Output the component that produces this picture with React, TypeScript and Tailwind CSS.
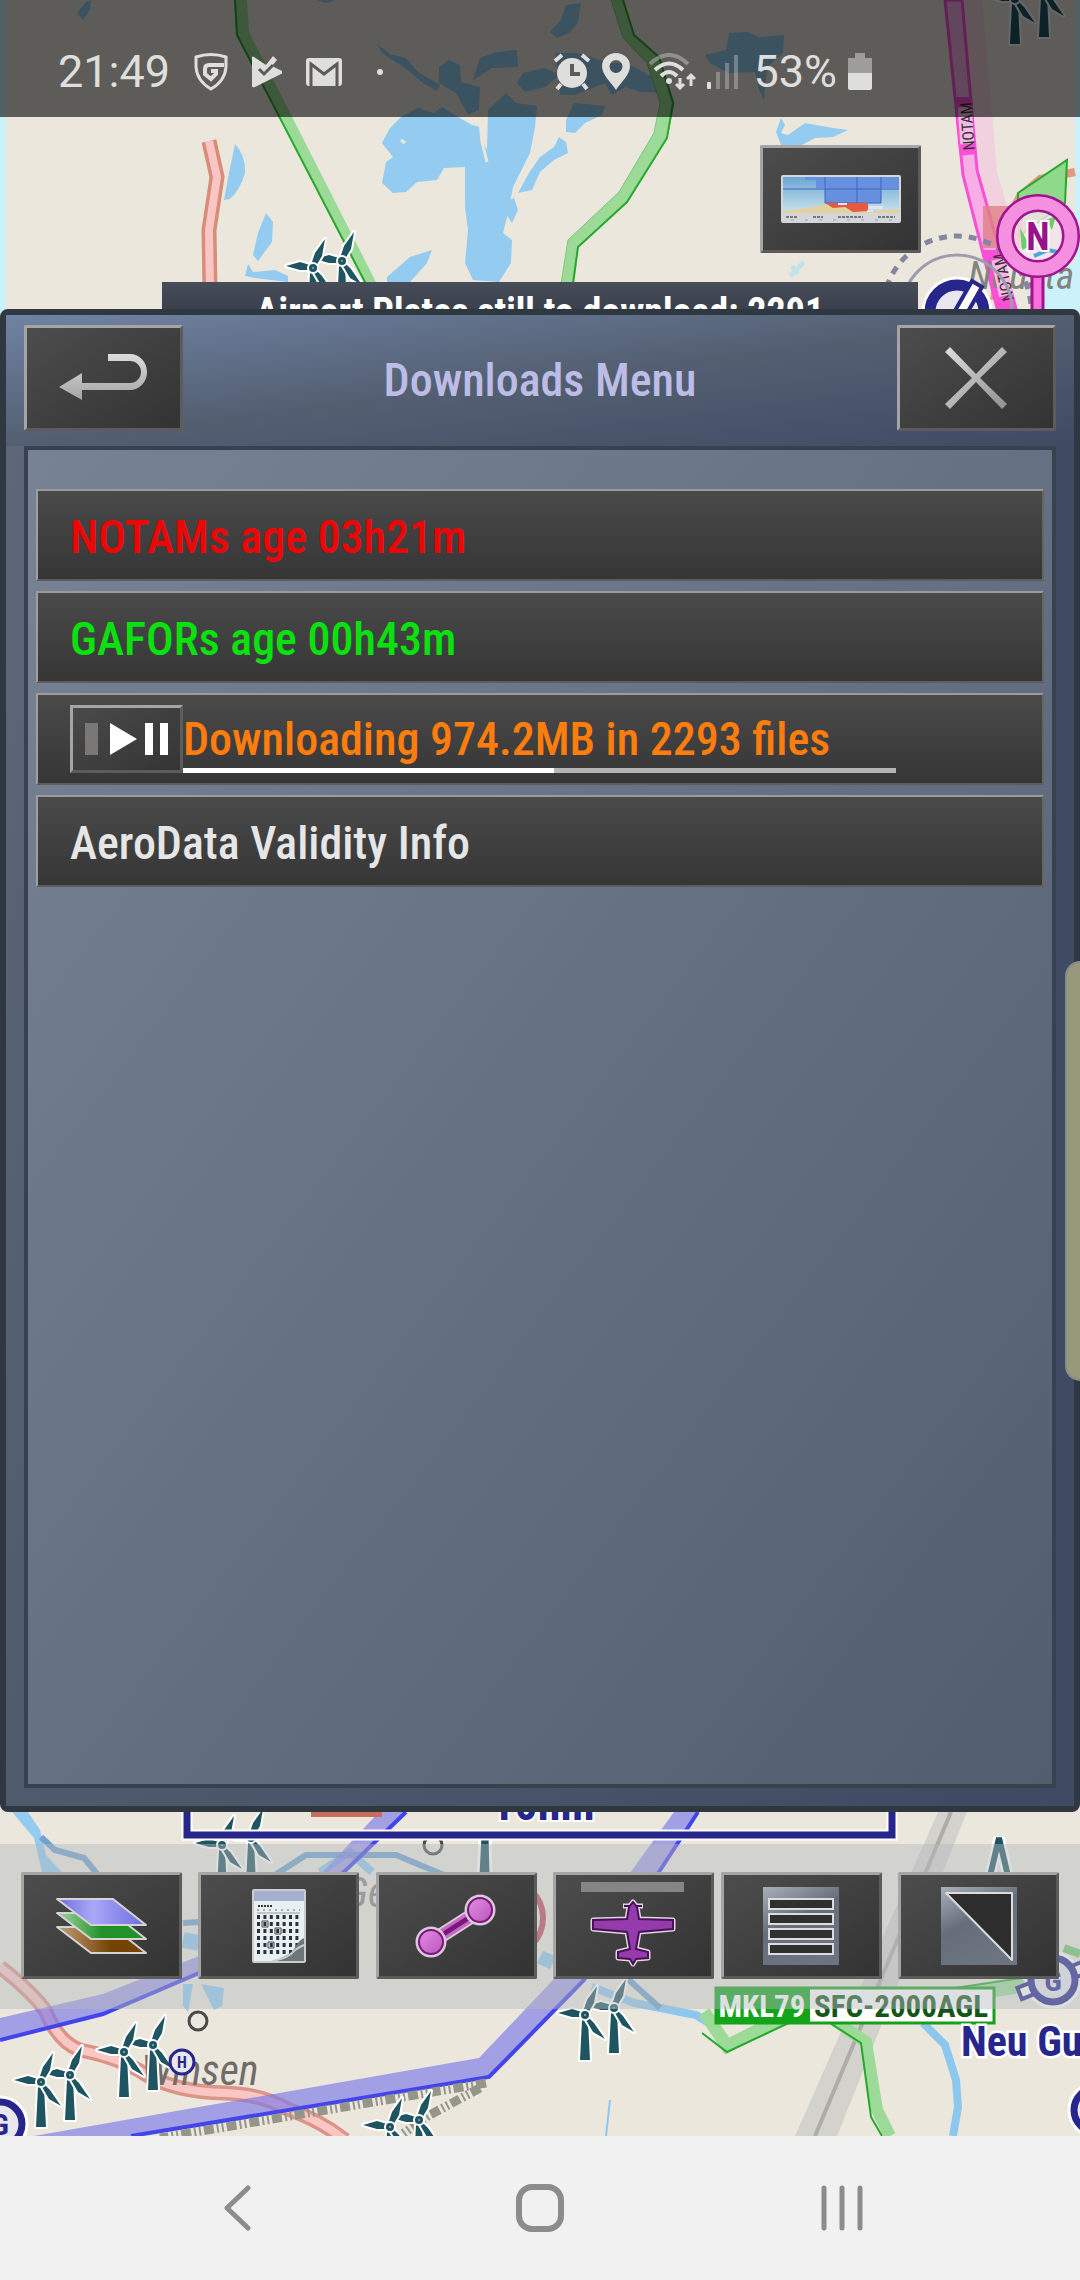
import React from 'react';

const NARROW = '"Roboto Condensed", "Liberation Sans Narrow", sans-serif';

interface PointProps {
  x: number;
  y: number;
}

const Turbine: React.FC<PointProps> = ({ x, y }) => (
  <g transform={`translate(${x} ${y})`} fill="#1f5560" stroke="#ffffff" strokeWidth="4" strokeLinejoin="round" paintOrder="stroke">
    <path d="M-3 5 L3 5 L5 45 L-5 45 Z" />
    <path d="M-2 -3 L2 -15 L12 -29 L9 -12 L3 -2 Z" />
    <path d="M-3 -3 L-13 -6 L-27 -2 L-13 2 L-3 2 Z" />
    <path d="M3 2 L9 8 L20 24 L8 17 L1 5 Z" />
    <circle r="4" />
    <circle r="1" fill="#8fb0b4" strokeWidth="0" />
  </g>
);

const TurbinePair: React.FC<PointProps> = ({ x, y }) => (
  <g>
    <Turbine x={x + 29} y={y - 7} />
    <Turbine x={x} y={y} />
  </g>
);

interface GliderSiteProps extends PointProps {
  runway?: boolean;
}

const GliderSite: React.FC<GliderSiteProps> = ({ x, y, runway = false }) => (
  <g transform={`translate(${x} ${y})`}>
    <circle r="22" fill="none" stroke="#ffffff" strokeWidth="13" />
    {runway && (
      <rect x="-36" y="-6" width="72" height="12" fill="#ffffff" stroke="#26268c" strokeWidth="4" transform="rotate(-22)" />
    )}
    <circle r="22" fill="#e9e6ee" stroke="#26268c" strokeWidth="7" />
    <text y="11" textAnchor="middle" fontSize="30" fontWeight="700" fill="#26268c">G</text>
  </g>
);

const water = [
  'M77 13 L86 2 L91 0 L90 10 L83 20 Z',
  'M316 0 L336 0 L326 3 Z',
  'M235 144 Q246 156 245 173 Q240 190 230 199 L224 200 L229 173 Z',
  'M266 213 L273 222 L272 242 L258 261 L253 255 L258 233 Z',
  'M248 264 L253 272 L275 270 L288 276 L288 282 L255 278 L245 276 Z',
  'M377 44 L390 54 L406 58 L418 72 L440 85 L437 91 L423 83 L405 68 L382 53 Z',
  'M439 67 L449 60 L460 65 L461 82 L480 87 L479 110 L468 115 L456 93 L439 83 Z',
  'M473 80 L480 58 L496 52 L517 50 L518 67 L492 68 Z',
  'M517 83 L523 73 L545 68 L560 75 L545 87 L525 92 Z',
  'M382 143 L390 128 L401 117 L418 108 L434 113 L442 107 L458 117 L472 125 L480 127 L482 140 L487 150 L488 110 L506 93 L516 103 L537 106 L535 127 L530 153 L513 187 L508 213 L503 233 L512 240 L511 263 L499 282 L473 280 L465 263 L468 230 L465 207 L465 167 L444 168 L437 180 L417 182 L406 192 L393 193 L382 183 L386 162 L393 157 Z',
  'M387 277 L410 257 L432 250 L427 263 L410 282 L387 282 Z',
  'M518 193 L529 173 L540 157 L554 147 L559 137 L566 142 L568 153 L554 160 L540 172 L532 190 Z',
  'M503 204 L514 198 L518 210 L512 223 L506 214 Z',
  'M566 120 L574 103 L605 106 L602 115 L585 123 L575 133 L566 132 Z',
  'M555 53 L578 53 L609 63 L626 63 L653 77 L671 93 L640 92 L626 87 L612 95 L605 83 L575 95 L560 95 Z',
  'M550 32 L561 20 L566 5 L581 3 L578 23 L569 33 L557 38 Z',
  'M705 55 L726 50 L729 33 L747 32 L760 37 L784 35 L783 53 L767 67 L764 100 L759 90 L755 72 L728 73 L710 63 Z',
  'M776 132 L781 118 L785 125 L781 133 L788 135 L805 123 L833 128 L848 130 L833 137 L815 138 L802 145 L781 145 Z',
  'M12 1812 L28 1812 L40 1830 L46 1855 L62 1872 L42 1872 L34 1838 Z',
  'M183 1984 L193 1984 L188 2012 L183 2006 Z',
  'M201 1984 L224 1988 L222 2006 L214 2010 Z',
];

const MapView: React.FC = () => (
  <svg
    className="absolute inset-0 h-full w-full"
    viewBox="0 0 1080 2136"
    preserveAspectRatio="xMidYMin slice"
    fontFamily={NARROW}
    aria-hidden="true"
  >
    <rect width="1080" height="2136" fill="#ebe7dd" />
    <rect width="6" height="340" fill="#cbf2fb" />
    <path d="M1075 0 H1080 V320 H1044 V276 L1075 262 Z" fill="#cbf2fb" />
    {water.map((d) => (
      <path key={d} d={d} fill="#93ccf0" />
    ))}
    <path d="M480 122 L482 142 L487 162 M405 143 L401 140" fill="none" stroke="#ebe7dd" strokeWidth="3" />
    <path d="M790 276 L804 262 M792 266 L798 274" stroke="#c5e2ea" strokeWidth="5" />

    {/* rivers and canals */}
    <g fill="none" stroke="#8cc8ee" strokeWidth="8">
      <path d="M592 1987 L634 2003 L696 2015 L709 2023" />
      <path d="M923 2023 L945 2045 L956 2080 L958 2107 L953 2136" />
      <path d="M320 1872 L350 1852 L372 1872" />
      <path d="M540 1957 L553 1963" strokeWidth="14" />
      <path d="M183 1940 L199 1943" strokeWidth="16" />
      <path d="M610 2100 L606 2136" strokeWidth="2" />
    </g>
    <g fill="none" stroke="#6fa3cc" strokeWidth="6">
      <path d="M41 1837 L55 1850 L84 1858 L98 1875" />
      <path d="M275 1875 L306 1855 L396 1855 L444 1875" />
      <path d="M620 1972 L660 2008" />
      <path d="M183 1923 L199 1922" />
    </g>

    {/* roads */}
    <g fill="none" strokeLinejoin="round">
      <path d="M209 141 L217 177 L209 230 L210 290" stroke="#d88c79" strokeWidth="15" />
      <path d="M209 141 L217 177 L209 230 L210 290" stroke="#fac6c3" strokeWidth="8" />
      <path d="M1075 172 L1040 179 L1020 196 L1008 220 L994 300" stroke="#e5987f" strokeWidth="8" />
      <path d="M0 1967 Q30 1990 45 2010 Q58 2042 80 2050 Q120 2058 145 2074 Q175 2092 225 2093 Q260 2094 285 2108 Q320 2120 345 2140" stroke="#dd9488" strokeWidth="15" />
      <path d="M0 1967 Q30 1990 45 2010 Q58 2042 80 2050 Q120 2058 145 2074 Q175 2092 225 2093 Q260 2094 285 2108 Q320 2120 345 2140" stroke="#fac6c3" strokeWidth="8" />
    </g>

    {/* grey corridor */}
    <path d="M938 1812 L967 1812 L837 2136 L795 2136 Z" fill="#cbc9c4" opacity="0.7" />
    <path d="M951 1812 L815 2136" stroke="#aeaca8" strokeWidth="4" />

    {/* green airspace */}
    <path d="M234 0 L247 0 L249 32 L377 284 L365 284 L236 35 Z" fill="#9cdb97" />
    <path d="M235 0 L237 35 L366 284" fill="none" stroke="#27a82d" strokeWidth="2" />
    <path d="M611 0 L623 38 L647 63 L660 103 L654 133 L619 192 L568 240 L561 284 L573 284 L578 247 L627 202 L667 138 L674 103 L659 57 L634 35 L623 0 Z" fill="#9cdb97" stroke="#7cc878" strokeWidth="1" />
    <path d="M573 284 L578 247 L627 202 L667 138 L673 103 L659 57 L634 35 L623 0" fill="none" stroke="#27a82d" strokeWidth="2" />
    <path d="M704 2012 L727 2046 L790 2014" fill="none" stroke="#9cdb97" strokeWidth="13" />
    <path d="M702 2033 L727 2052 L795 2020" fill="none" stroke="#27a82d" strokeWidth="2" />
    <path d="M834 2020 L866 2042 L877 2110 L890 2136" fill="none" stroke="#9cdb97" strokeWidth="12" />
    <path d="M830 2023 L861 2043 L871 2117 L882 2136" fill="none" stroke="#27a82d" strokeWidth="2" />
    <path d="M960 1987 L1022 1978 L1028 1992 L995 1997 Z" fill="#9cdb97" />
    <path d="M955 1988 L1022 1978" stroke="#27a82d" strokeWidth="2" />
    <path d="M1064 1948 L1080 1954" stroke="#6cc868" strokeWidth="8" />

    {/* blue airspace */}
    <path d="M379 1812 L406 1812 L344 1872 L199 1973 L103 2014 L0 2040 L0 2018 L103 1994 L199 1956 L323 1872 Z" fill="#7b78e8" opacity="0.65" />
    <path d="M406 1812 L344 1872 L199 1973 L103 2014 L0 2040" fill="none" stroke="#4444ec" strokeWidth="4" />
    <path d="M674 1812 L698 1812 L584 1980 L489 2077 L131 2136 L34 2136 L479 2058 L553 1980 Z" fill="#7b78e8" opacity="0.65" />
    <path d="M698 1812 L659 1872 L584 1980 L489 2077 L131 2136" fill="none" stroke="#4444ec" strokeWidth="4" />
    <path d="M486 2083 L160 2138" stroke="#95968a" strokeWidth="9" strokeDasharray="10 3 2 3 2 3" />
    <path d="M480 2088 L428 2116 L400 2136" fill="none" stroke="#95968a" strokeWidth="9" strokeDasharray="10 3 2 3 2 3" />

    {/* NOTAM corridor */}
    <path d="M962 0 L982 0 L990 90 L997 172 L1014 230 L1000 245 L977 177 Z" fill="#f2cdde" opacity="0.85" />
    <path d="M945 0 L962 0 L977 170 L1017 312 L998 312 L963 175 Z" fill="#f6aee4" stroke="#fb4fd6" strokeWidth="3" />
    <path d="M954 97 L972 97 L976 154 L960 156 Z" fill="#fb4fd6" />
    <path d="M983 250 L999 250 L1018 312 L999 312 Z" fill="#fb4fd6" />
    <rect x="959" y="107" width="14" height="37" fill="#f8b9e8" transform="rotate(-4 966 126)" />
    <text fontSize="16" fill="#333333" textAnchor="middle" transform="translate(973 126) rotate(-94)">NOTAM</text>
    <path d="M1018 193 L1067 160 L1065 203 L1018 237 Z" fill="#8fd98a" stroke="#27a82d" strokeWidth="2" />
    <rect x="983" y="206" width="40" height="42" fill="#e07f86" opacity="0.8" />
    <text x="968" y="289" fontSize="39" fontStyle="italic" fill="#85837e">Neusta</text>
    <rect x="995" y="259" width="14" height="37" fill="#f8b9e8" transform="rotate(-12 1002 277)" />
    <text fontSize="16" fill="#333333" textAnchor="middle" transform="translate(1009 276) rotate(-102)">NOTAM</text>
    <circle cx="957" cy="310" r="74" fill="none" stroke="#85879e" strokeWidth="5" strokeDasharray="8 7" />
    <circle cx="957" cy="310" r="55" fill="none" stroke="#9d9cab" strokeWidth="3" />
    <circle cx="957" cy="312" r="27" fill="none" stroke="#ffffff" strokeWidth="17" />
    <circle cx="957" cy="312" r="27" fill="#e9e6ee" stroke="#26268c" strokeWidth="11" />
    <path d="M952 316 L972 281 L982 287 L962 322 Z" fill="#ffffff" stroke="#26268c" strokeWidth="4" />
    <rect x="1032" y="274" width="11" height="38" fill="#fb6fdb" stroke="#a01490" strokeWidth="3" />
    <circle cx="1038" cy="236" r="24" fill="#f7e3ee" opacity="0.8" />
    <path d="M1020 228 L1030 246 L1022 250 Z M1056 216 L1046 220 L1052 230 Z" fill="#6fcb6c" />
    <path d="M1034 256 L1048 250 L1058 252" fill="none" stroke="#4aa6dc" strokeWidth="4" />
    <circle cx="1038" cy="236" r="33" fill="none" stroke="#a01490" strokeWidth="18" />
    <circle cx="1038" cy="236" r="33" fill="none" stroke="#f58fe0" strokeWidth="13" />
    <text x="1038" y="250" fontSize="38" fontWeight="700" fill="#98128a" stroke="#ffffff" strokeWidth="4" paintOrder="stroke" textAnchor="middle">N</text>

    {/* obstacles */}
    <TurbinePair x={1015} y={-1} />
    <TurbinePair x={313} y={268} />
    <TurbinePair x={222} y={1845} />
    <TurbinePair x={585} y={2015} />
    <path d="M480 1836 L490 1836 L491 1875 L478 1875 Z" fill="#1f5560" stroke="#ffffff" strokeWidth="3" />
    <path d="M990 1876 L999 1838 L1008 1876" fill="none" stroke="#ffffff" strokeWidth="11" />
    <path d="M990 1876 L999 1838 L1008 1876" fill="none" stroke="#1f5560" strokeWidth="6" />
    <circle cx="433" cy="1845" r="9" fill="none" stroke="#4a4a4a" strokeWidth="3" />
    <circle cx="198" cy="2021" r="9" fill="none" stroke="#4a4a4a" strokeWidth="3" />
    <circle cx="505" cy="1918" r="38" fill="none" stroke="#c2475e" strokeWidth="6" />
    <text x="344" y="1907" fontSize="42" fontStyle="italic" fill="#85837e">Ge</text>
    <text x="141" y="2085" fontSize="42" fontStyle="italic" fill="#6f6d69">Winsen</text>
    <TurbinePair x={41} y={2082} />
    <TurbinePair x={124} y={2052} />
    <TurbinePair x={390} y={2127} />
    <circle cx="182" cy="2062" r="12" fill="#e9e6ee" stroke="#26268c" strokeWidth="3" />
    <text x="182" y="2068" fontSize="16" fontWeight="700" fill="#26268c" textAnchor="middle">H</text>
    <GliderSite x={1053} y={1980} runway />
    <GliderSite x={0} y={2124} />
    <GliderSite x={1096} y={2110} />

    {/* scale box */}
    <rect x="311" y="1806" width="71" height="11" fill="#c66f5d" />
    <path d="M187 1800 L187 1835 L892 1835 L892 1800" fill="none" stroke="#ffffff" strokeWidth="11" />
    <path d="M187 1800 L187 1835 L892 1835 L892 1800" fill="none" stroke="#26268c" strokeWidth="7" />
    <text x="543" y="1820" fontSize="46" fontWeight="700" fill="#26268c" stroke="#ffffff" strokeWidth="4" paintOrder="stroke" textAnchor="middle">10nm</text>

    {/* airspace label */}
    <rect x="716" y="1988" width="278" height="35" fill="#ffffff" stroke="#16a01c" strokeWidth="3" />
    <rect x="716" y="1988" width="94" height="35" fill="#12a519" />
    <text x="762" y="2017" fontSize="31" fontWeight="700" fill="#ffffff" textAnchor="middle">MKL79</text>
    <text x="901" y="2017" fontSize="31" fontWeight="700" fill="#14561a" textAnchor="middle">SFC-2000AGL</text>
    <text x="961" y="2056" fontSize="42" fontWeight="700" fill="#26268c" stroke="#ffffff" strokeWidth="5" paintOrder="stroke">Neu Gu</text>
  </svg>
);

const StatusBar: React.FC = () => (
  <header className="relative flex h-[117px] items-center justify-between bg-black/60 pt-[26px] pr-[208px] pl-[58px] font-['Roboto',sans-serif] text-[45px] leading-none text-[#dededc]">
    <div className="flex items-center gap-6">
      <span>21:49</span>
      <svg width="34" height="38" viewBox="0 0 34 38" fill="none" stroke="currentColor" strokeWidth="3">
        <path d="M2 4 Q17 -1 32 4 V14 Q31 28 17 36 Q3 28 2 14 Z" />
        <path d="M30 12 H15 Q11 12 11 16 V21 L17 26 L22 21 V18 H17" strokeWidth="4" />
      </svg>
      <svg width="30" height="32" viewBox="0 0 30 32">
        <path d="M0 1 Q0 0 2 1 L14 9 L21 0 L25 4 L20 10 L30 15 Q31 17 29 18 L3 31 Q0 32 0 30 Z" fill="currentColor" />
        <path d="M7 13 L12 18 L21 9" fill="none" stroke="#5c5b57" strokeWidth="3" />
      </svg>
      <svg width="36" height="30" viewBox="0 0 36 30">
        <rect x="0" y="1" width="36" height="28" rx="3" fill="currentColor" />
        <path d="M5 29 V7 L18 17 L31 7 V29" fill="none" stroke="#5c5b57" strokeWidth="3" />
      </svg>
      <svg width="28" height="30" viewBox="0 0 28 30">
        <circle cx="14" cy="15" r="3" fill="currentColor" />
      </svg>
    </div>
    <div className="flex items-center gap-[11px]">
      <svg width="38" height="38" viewBox="0 0 38 38" fill="none" stroke="currentColor" strokeWidth="4">
        <circle cx="19" cy="20" r="15" fill="currentColor" stroke="none" />
        <path d="M2 8 L9 2 M29 2 L36 8 M8 31 L4 36 M30 31 L34 36" />
        <path d="M19 11 V21 H27" stroke="#5c5b57" />
      </svg>
      <svg width="28" height="37" viewBox="0 0 28 37">
        <path d="M14 37 C9 29 0 22 0 13 A14 13 0 0 1 28 13 C28 22 19 29 14 37 Z M14 7 A6 6 0 1 0 14 20 A6 6 0 1 0 14 7 Z" fill="currentColor" fillRule="evenodd" />
      </svg>
      <svg className="ml-2" width="47" height="37" viewBox="0 0 47 37" fill="none" stroke="currentColor" strokeWidth="4">
        <path d="M1 11 Q20 -7 39 11" opacity="0.4" />
        <path d="M6 17 Q20 4 34 17" />
        <path d="M12 23 Q20 15 28 23" />
        <circle cx="20" cy="28" r="3" fill="currentColor" stroke="none" />
        <path d="M31 25 V35 M27 31 L31 35 L35 31 M42 33 V22 M38 26 L42 22 L46 26" strokeWidth="3" />
      </svg>
      <svg width="31" height="36" viewBox="0 0 31 36" fill="currentColor">
        <rect x="0" y="28" width="4" height="7" rx="1" />
        <path d="M9 18 h4 v17 h-4 Z M18 9 h4 v26 h-4 Z M27 1 h4 v34 h-4 Z" opacity="0.35" />
      </svg>
      <span className="ml-1">53%</span>
      <svg width="24" height="37" viewBox="0 0 24 37" fill="currentColor">
        <path d="M7 0 H17 V5 H24 V20 H0 V5 H7 Z" opacity="0.5" />
        <path d="M0 20 H24 V35 Q24 37 22 37 H2 Q0 37 0 35 Z" />
      </svg>
    </div>
  </header>
);

interface TileProps {
  label: string;
  className?: string;
  children: React.ReactNode;
}

const Tile: React.FC<TileProps> = ({ label, className = '', children }) => (
  <button
    type="button"
    aria-label={label}
    className={`flex items-center justify-center rounded-[2px] border-[3px] border-t-[#a5a5a5] border-r-[#5c5c5c] border-b-[#5c5c5c] border-l-[#a5a5a5] bg-linear-to-br from-[#4d4d4d] via-[#404040] to-[#333333] ${className}`}
  >
    {children}
  </button>
);

const ProfileIcon: React.FC = () => (
  <svg width="120" height="48" viewBox="0 0 120 48">
    <defs>
      <linearGradient id="sky" x1="0" y1="0" x2="0" y2="1">
        <stop offset="0" stopColor="#6ba6d6" />
        <stop offset="1" stopColor="#c9e4ea" />
      </linearGradient>
    </defs>
    <rect width="120" height="48" rx="2" fill="#d4d7da" />
    <rect x="2" y="2" width="116" height="36" fill="url(#sky)" />
    <path d="M24 2 V5 H35 V13 H44 V28 H100 V13 H118 V2 Z" fill="#6690e0" />
    <path d="M44 2 V28 H100 V2 M2 14 H118 M76 2 V28" fill="none" stroke="#4463bd" />
    <path d="M2 36 L20 34 L46 29 L80 36 L118 34 V38 H2 Z" fill="#e3d1a2" />
    <path d="M44 28 H87 V36 L72 37 L64 32 L52 33 Z" fill="#e8583c" />
    <path d="M57 28 h9 v2 h-9 Z M88 31 h14 v3 h-14 Z M86 35 h6 v2 h-6 Z" fill="#dfe4fa" />
    <path d="M5 42 H16 M32 42 H42 M57 42 H82 M97 42 H114" stroke="#777777" strokeWidth="2" strokeDasharray="3 1" />
    <path d="M10 45 H112" stroke="#9e9e9e" strokeDasharray="3 11" />
  </svg>
);

const BackIcon: React.FC = () => (
  <svg width="90" height="50" viewBox="0 0 90 50">
    <defs>
      <linearGradient id="backFill" x1="0" y1="0" x2="0" y2="1">
        <stop offset="0" stopColor="#dcdadb" />
        <stop offset="1" stopColor="#a5a3a4" />
      </linearGradient>
    </defs>
    <path d="M49 1 H71 A17 18 0 0 1 71 37 H23 V47 L0 34 L23 20 V30 H71 A11 11 0 0 0 71 8 H49 Z" fill="url(#backFill)" />
  </svg>
);

const CloseIcon: React.FC = () => (
  <svg width="62" height="62" viewBox="0 0 62 62">
    <defs>
      <linearGradient id="closeFill" x1="0" y1="0" x2="1" y2="1">
        <stop offset="0" stopColor="#dedede" />
        <stop offset="1" stopColor="#8f8f8f" />
      </linearGradient>
    </defs>
    <path d="M5 0 L31 27 L57 0 L62 5 L35 31 L62 57 L57 62 L31 35 L5 62 L0 57 L27 31 L0 5 Z" fill="url(#closeFill)" />
  </svg>
);

const LayersIcon: React.FC = () => (
  <svg width="92" height="58" viewBox="0 0 92 58" stroke="#d5d3d3" strokeWidth="2" strokeLinejoin="round">
    <defs>
      <linearGradient id="layerTop" x1="0" y1="0" x2="1" y2="0">
        <stop offset="0" stopColor="#6f6be0" />
        <stop offset="0.4" stopColor="#a9a8f7" />
        <stop offset="1" stopColor="#6f6be0" />
      </linearGradient>
      <linearGradient id="layerMid" x1="0" y1="0" x2="1" y2="0">
        <stop offset="0.1" stopColor="#8ac98a" />
        <stop offset="0.5" stopColor="#23912a" />
      </linearGradient>
      <linearGradient id="layerLow" x1="0" y1="0" x2="1" y2="0">
        <stop offset="0.1" stopColor="#b59067" />
        <stop offset="0.6" stopColor="#754404" />
      </linearGradient>
    </defs>
    <path d="M1 30 H57 L90 56 H35 Z" fill="url(#layerLow)" />
    <path d="M1 16 H57 L90 42 H35 Z" fill="url(#layerMid)" />
    <path d="M1 2 H57 L90 28 H35 Z" fill="url(#layerTop)" />
  </svg>
);

const calendarRows = [0, 1, 2, 3, 4, 5];
const calendarCols = [0, 1, 2, 3, 4, 5, 6];

const CalendarIcon: React.FC = () => (
  <svg width="54" height="74" viewBox="0 0 54 74">
    <rect x="1" y="1" width="52" height="72" rx="1" fill="#e9f0f4" stroke="#cccccc" strokeWidth="2" />
    <rect x="2" y="2" width="50" height="10" fill="#a5afd2" />
    <path d="M6 17 H20" stroke="#333333" strokeWidth="2" strokeDasharray="2 1" />
    <path d="M5 21 H48" stroke="#666666" strokeDasharray="2 4" />
    <path d="M5 24 H48" stroke="#999999" />
    {calendarRows.map((row) =>
      calendarCols.map((col) => (
        <rect key={`${row}-${col}`} x={5 + col * 6.4} y={26 + row * 7} width="3" height="4" fill="#2b3138" />
      )),
    )}
    <path d="M10 32 h6 v6 h-6 Z M23 39 h6 v6 h-6 Z M16 53 h6 v6 h-6 Z" fill="none" stroke="#444444" />
    <path d="M20 72 Q36 68 42 60 Q46 52 52 49 V72 Z" fill="#6f7678" />
    <path d="M20 72 Q36 70 43 61 Q47 58 52 56" fill="none" stroke="#c9cfd1" strokeWidth="2" />
  </svg>
);

const RouteIcon: React.FC = () => (
  <svg width="82" height="66" viewBox="0 0 82 66">
    <defs>
      <linearGradient id="knob" x1="0" y1="0" x2="1" y2="1">
        <stop offset="0" stopColor="#e493e4" />
        <stop offset="1" stopColor="#b850b9" />
      </linearGradient>
    </defs>
    <path d="M16 49 L66 17" stroke="#d9c9da" strokeWidth="15" />
    <path d="M16 49 L66 17" stroke="#c767c7" strokeWidth="11" />
    <path d="M16 49 L66 17" stroke="#7a167c" strokeWidth="5" />
    <circle cx="16" cy="49" r="14" fill="url(#knob)" stroke="#d9c9da" strokeWidth="3" />
    <circle cx="16" cy="49" r="12" fill="none" stroke="#7a167c" strokeWidth="2" />
    <circle cx="65" cy="17" r="14" fill="url(#knob)" stroke="#d9c9da" strokeWidth="3" />
    <circle cx="65" cy="17" r="12" fill="none" stroke="#7a167c" strokeWidth="2" />
  </svg>
);

const PLANE_BODY =
  'M52 20 L56 25 L58 37 L92 38 V47 L58 50 L55 67 L67 70 V76 L55 77 L52 82 L49 77 L37 76 V70 L49 67 L46 50 L12 47 V38 L46 37 L48 25 Z';

const PlaneIcon: React.FC = () => (
  <svg width="104" height="87" viewBox="0 0 104 87">
    <rect x="0" y="0" width="103" height="10" fill="#858585" />
    <path d="M42 24 H62" stroke="#e0d6e2" strokeWidth="5" />
    <path d={PLANE_BODY} fill="#943cab" stroke="#e0d6e2" strokeWidth="5" strokeLinejoin="round" />
    <path d="M43 24 H61" stroke="#4a0f58" strokeWidth="2" />
    <path d={PLANE_BODY} fill="#943cab" stroke="#4a0f58" strokeWidth="2" />
  </svg>
);

const MenuIcon: React.FC = () => (
  <svg width="76" height="78" viewBox="0 0 76 78">
    <defs>
      <linearGradient id="steel" x1="0" y1="0" x2="0.5" y2="1">
        <stop offset="0" stopColor="#a9b0b8" />
        <stop offset="0.5" stopColor="#666e7b" />
        <stop offset="1" stopColor="#6c7482" />
      </linearGradient>
    </defs>
    <rect width="76" height="78" fill="url(#steel)" />
    <g fill="#303030" stroke="#dcdcdc" strokeWidth="2">
      <rect x="6" y="12" width="64" height="10" />
      <rect x="6" y="27" width="64" height="10" />
      <rect x="6" y="42" width="64" height="10" />
      <rect x="6" y="57" width="64" height="10" />
    </g>
  </svg>
);

const ContrastIcon: React.FC = () => (
  <svg width="76" height="78" viewBox="0 0 76 78">
    <rect width="76" height="78" fill="url(#steel)" />
    <path d="M5 6 H71 V73 Z" fill="#2d2d2d" stroke="#dcdcdc" strokeWidth="2" strokeLinejoin="round" />
  </svg>
);

const rowStyle =
  'flex h-[92px] w-full items-center border-2 border-t-[#9b9b9c] border-r-[#656566] border-b-[#5d5d5e] border-l-[#a0a0a0] bg-linear-to-b from-[#4a4a4a] to-[#363636] pl-8 text-left';

const DownloadRow: React.FC = () => {
  const progress = 52;

  return (
    <div className={rowStyle}>
      <button
        type="button"
        aria-label="Pause or resume download"
        className="flex h-[68px] w-[113px] items-center justify-center border-[3px] border-t-[#a5a5a5] border-r-[#5c5c5c] border-b-[#5c5c5c] border-l-[#a5a5a5] bg-linear-to-br from-[#4a4a4a] to-[#353535]"
      >
        <svg width="84" height="34" viewBox="0 0 84 34">
          <rect x="0" y="1" width="13" height="32" fill="#797876" />
          <path d="M25 1 L52 17 L25 33 Z M60 1 H68 V33 H60 Z M75 1 H83 V33 H75 Z" fill="#ffffff" />
        </svg>
      </button>
      <div className="flex h-[68px] w-[713px] flex-col justify-between">
        <p className="pt-[6px] leading-[57px] whitespace-nowrap text-[#ff7d0c]">Downloading 974.2MB in 2293 files</p>
        <div
          role="progressbar"
          aria-label="Download progress"
          aria-valuenow={progress}
          aria-valuemin={0}
          aria-valuemax={100}
          className="h-[5px] shrink-0 bg-[#b5b5b5]"
        >
          <div className="h-full bg-white" style={{ width: `${progress}%` }} />
        </div>
      </div>
    </div>
  );
};

const DownloadsPanel: React.FC = () => (
  <section className="relative flex flex-1 flex-col rounded-lg border-[6px] border-[#2f3740] bg-[#4b586b] px-[18px] pb-[18px]">
    <div className="absolute inset-0 bg-linear-to-b from-[#5f6879] to-[#4f5b6c]" />
    <div className="absolute inset-0 bg-linear-to-r from-transparent to-[#3f4a63]" />
    <div className="relative -mx-[18px] flex h-[131px] items-start justify-between bg-linear-to-br from-[#7083a4] via-[#535f71] to-[#3f4b64] px-[18px] pt-[10px]">
      <Tile label="Back" className="h-[106px] w-[159px]">
        <BackIcon />
      </Tile>
      <h1 className="pt-[6px] text-[46px] leading-[98px] font-medium text-[#bcbce6]">Downloads Menu</h1>
      <Tile label="Close" className="h-[106px] w-[159px]">
        <CloseIcon />
      </Tile>
    </div>
    <div className="relative flex-1 border-4 border-[#38414e] bg-linear-to-br from-[#778394] via-[#667083] to-[#525d70] px-2 pt-[39px]">
      <ul className="flex flex-col gap-[10px] text-[46px] font-medium">
        <li>
          <button type="button" className={rowStyle}>
            <span className="pt-1 text-[#ee0606]">NOTAMs age 03h21m</span>
          </button>
        </li>
        <li>
          <button type="button" className={rowStyle}>
            <span className="pt-1 text-[#0be10e]">GAFORs age 00h43m</span>
          </button>
        </li>
        <li>
          <DownloadRow />
        </li>
        <li>
          <button type="button" className={rowStyle}>
            <span className="pt-1 text-[#e6e6e6]">AeroData Validity Info</span>
          </button>
        </li>
      </ul>
    </div>
    {/* edge panel handle */}
    <div className="absolute top-[646px] -right-[6px] h-[420px] w-[15px] rounded-l-2xl border-y-2 border-l-2 border-[#868c88] bg-[#97987a]" />
  </section>
);

const Toolbar: React.FC = () => (
  <div className="relative mt-8 mb-[127px] flex h-[165px] items-center justify-between bg-[#b4b8bc]/45 px-[21px] pb-[2px]">
    <Tile label="Layers" className="h-[107px] w-[161px]">
      <LayersIcon />
    </Tile>
    <Tile label="Calendar" className="h-[107px] w-[161px]">
      <CalendarIcon />
    </Tile>
    <Tile label="Route" className="h-[107px] w-[161px]">
      <RouteIcon />
    </Tile>
    <div className="flex gap-[7px]">
      <Tile label="Aircraft" className="h-[107px] w-[161px]">
        <PlaneIcon />
      </Tile>
      <Tile label="Menu" className="h-[107px] w-[161px]">
        <MenuIcon />
      </Tile>
    </div>
    <Tile label="Brightness" className="h-[107px] w-[161px]">
      <ContrastIcon />
    </Tile>
  </div>
);

const NavigationBar: React.FC = () => (
  <nav className="grid h-36 grid-cols-3 bg-[#f1f1f1] px-[87px] text-[#8c8c8c]">
    <button type="button" aria-label="Back" className="flex items-center justify-center">
      <svg width="28" height="48" viewBox="0 0 28 48" fill="none" stroke="currentColor" strokeWidth="5" strokeLinecap="round" strokeLinejoin="round">
        <path d="M24 4 L3 24 L24 44" />
      </svg>
    </button>
    <button type="button" aria-label="Home" className="flex items-center justify-center">
      <svg width="48" height="48" viewBox="0 0 48 48" fill="none" stroke="currentColor" strokeWidth="6">
        <rect x="3" y="3" width="42" height="42" rx="13" />
      </svg>
    </button>
    <button type="button" aria-label="Recent apps" className="flex items-center justify-center">
      <svg width="42" height="46" viewBox="0 0 42 46" stroke="currentColor" strokeWidth="5" strokeLinecap="round">
        <path d="M3 3 V43 M21 3 V43 M39 3 V43" />
      </svg>
    </button>
  </nav>
);

const App: React.FC = () => {
  return (
    <div className="flex min-h-screen flex-col font-['Roboto_Condensed','Liberation_Sans_Narrow',sans-serif]">
      <main className="relative flex flex-1 flex-col overflow-hidden">
        <MapView />
        <StatusBar />
        <div className="relative mt-7 flex justify-end pr-[159px]">
          <Tile label="Vertical profile" className="h-[108px] w-[161px]">
            <ProfileIcon />
          </Tile>
        </div>
        <div className="relative mx-[162px] mt-[29px] h-[27px] overflow-hidden bg-linear-to-b from-[#484e59] to-[#3a414c] text-center text-[38px] leading-[60px] font-bold whitespace-nowrap text-white">
          Airport Plates still to download: 2291
        </div>
        <DownloadsPanel />
        <Toolbar />
      </main>
      <NavigationBar />
    </div>
  );
};

export default App;
